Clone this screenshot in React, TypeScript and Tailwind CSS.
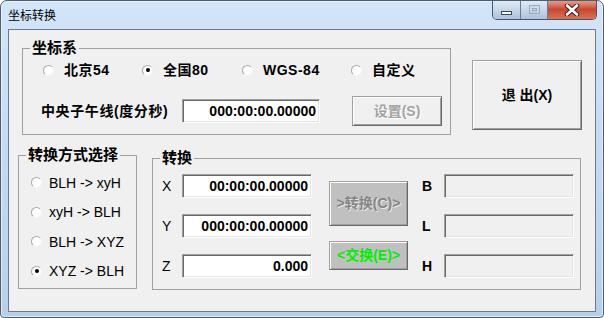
import React from "react";

const ui = "font-['Liberation_Sans','Noto_Sans_CJK_SC',sans-serif]";

const Radio = ({ label, checked = false, bold = false, gap = "ml-[8px]", className = "" }: { label: string; checked?: boolean; bold?: boolean; gap?: string; className?: string }) => (
  <label className={`flex items-center ${className}`}>
    <span className="flex h-[11px] w-[11px] items-center justify-center rounded-full border border-[#a8a8a8] border-b-[#f4f4f4] border-r-[#f4f4f4] bg-white">
      {checked && <span className="h-[4px] w-[4px] rounded-full bg-black" />}
    </span>
    <span className={`${gap} text-[14px] leading-[18px] text-black ${bold ? "font-bold tracking-[0.5px]" : ""}`}>{label}</span>
  </label>
);

const Sunken = ({ value = "", width = "w-[130px]", readOnly = false }: { value?: string; width?: string; readOnly?: boolean }) => (
  <div
    className={`${width} flex h-[24px] items-center justify-end border border-[#a0a0a0] border-b-white border-r-white pr-[3px] shadow-[inset_1px_1px_0_#696969,inset_-1px_-1px_0_#e3e3e3] ${
      readOnly ? "bg-[#f0f0f0]" : "bg-white"
    }`}
  >
    <span className="text-[14px] font-bold leading-[18px] text-black">{value}</span>
  </div>
);

const Group = ({ title, className, children }: { title: string; className: string; children: React.ReactNode }) => (
  <fieldset className={`border border-[#a0a0a0] ${className}`}>
    <legend className="ml-[7px] px-[2px] text-[15px] font-bold leading-[20px] text-black">{title}</legend>
    {children}
  </fieldset>
);

const raised =
  "flex items-center justify-center border border-[#a0a0a0] border-b-[#696969] border-r-[#696969] shadow-[inset_1px_1px_0_#ffffff,inset_-1px_-1px_0_#a0a0a0]";

export default function App() {
  return (
    <div className={`${ui} h-[318px] w-[604px] overflow-hidden rounded-b-[4px] rounded-t-[7px] border border-[#4f5e6f] bg-gradient-to-b from-[#d3e5f8] via-[#c4daf2] to-[#b7d0ea] shadow-[inset_0_0_0_1px_rgba(255,255,255,0.55)]`}>
      {/* title bar */}
      <div className="flex h-[28px] items-start">
        <span className="pl-[7px] pt-[6px] text-[12px] leading-[18px] text-black">坐标转换</span>
        <div className="-mt-[1px] ml-auto mr-[6px] flex h-[20px] overflow-hidden rounded-b-[5px] border border-t-0 border-[#46556a]">
          <div className="flex w-[28px] items-center justify-center border-r border-[#6c7c90] bg-gradient-to-b from-[#e4edf8] via-[#c9d8ea] to-[#adc2dc]">
            <span className="mt-[6px] h-[4px] w-[11px] border border-[#3c4a5c] bg-white" />
          </div>
          <div className="flex w-[27px] items-center justify-center border-r border-[#6c7c90] bg-gradient-to-b from-[#e4edf8] via-[#c9d8ea] to-[#adc2dc]">
            <span className="flex h-[9px] w-[11px] items-center justify-center border border-[#9aaabd]">
              <span className="h-[3px] w-[5px] border border-[#9aaabd]" />
            </span>
          </div>
          <div className="flex w-[48px] items-center justify-center bg-gradient-to-b from-[#e8a493] via-[#c9462f] to-[#d3755c]">
            <svg width="16" height="12" viewBox="0 0 16 12">
              <path d="M3 1.5 L13 10.5 M13 1.5 L3 10.5" stroke="#3a1a14" strokeWidth="4.5" strokeLinecap="round" />
              <path d="M3 1.5 L13 10.5 M13 1.5 L3 10.5" stroke="#ffffff" strokeWidth="2.6" strokeLinecap="round" />
            </svg>
          </div>
        </div>
      </div>

      {/* client area */}
      <div className="mx-[7px] h-[283px] border border-[#6d7a89] bg-[#f0f0f0] text-black">
        <div className="flex items-start pl-[13px] pt-[8px]">
          <Group title="坐标系" className="h-[97px] w-[429px]">
            <div className="mt-[3px] flex pl-[20px]">
              <Radio label="北京54" bold gap="ml-[10px]" className="w-[99px]" />
              <Radio label="全国80" bold checked gap="ml-[10px]" className="w-[100px]" />
              <Radio label="WGS-84" bold gap="ml-[10px]" className="w-[109px]" />
              <Radio label="自定义" bold gap="ml-[10px]" />
            </div>
            <div className="mt-[17px] flex h-[30px] items-center pl-[18px]">
              <span className="w-[141px] text-[14px] font-bold leading-[18px] tracking-[0.6px]">中央子午线(度分秒)</span>
              <Sunken value="000:00:00.00000" width="w-[138px]" />
              <button className={`${raised} ml-[32px] h-[30px] w-[90px] bg-[#f0f0f0] text-[14px] font-bold text-[#a3a3a3] [text-shadow:1px_1px_0_#ffffff]`}>
                设置(S)
              </button>
            </div>
          </Group>
          <button className={`${raised} ml-[21px] mt-[22px] h-[70px] w-[110px] bg-[#f0f0f0] text-[14px] font-bold`}>
            退 出(X)
          </button>
        </div>

        <div className="mt-[10px] flex items-start pl-[9px]">
          <Group title="转换方式选择" className="h-[144px] w-[119px]">
            <div className="flex flex-col pl-[12px] pt-[3px]">
              <Radio label="BLH -> xyH" gap="ml-[7px]" className="h-[29.5px]" />
              <Radio label="xyH -> BLH" gap="ml-[7px]" className="h-[29.5px]" />
              <Radio label="BLH -> XYZ" gap="ml-[7px]" className="h-[29.5px]" />
              <Radio label="XYZ -> BLH" checked gap="ml-[7px]" className="h-[29.5px]" />
            </div>
          </Group>

          <Group title="转换" className="ml-[15px] mt-[3px] h-[142px] w-[429px]">
            <div className="flex items-start pl-[9px]">
              <div className="mt-[6px] flex flex-col gap-[16px]">
                {[
                  ["X", "00:00:00.00000"],
                  ["Y", "000:00:00.00000"],
                  ["Z", "0.000"],
                ].map(([k, v]) => (
                  <div key={k} className="flex items-center">
                    <span className="w-[20px] text-[14px] leading-[18px]">{k}</span>
                    <Sunken value={v} />
                  </div>
                ))}
              </div>
              <div className="ml-[17px] flex flex-col">
                <button className={`${raised} mt-[13px] h-[45px] w-[79px] bg-[#c0c0c0] text-[14px] font-bold text-[#858585] [text-shadow:1px_1px_0_#e8e8e8]`}>
                  &gt;转换(C)&gt;
                </button>
                <button className={`${raised} mt-[15px] h-[29px] w-[79px] bg-[#c0c0c0] text-[14px] font-bold text-[#00ee00]`}>
                  &lt;交换(E)&gt;
                </button>
              </div>
              <div className="ml-[14px] mt-[6px] flex flex-col gap-[16px]">
                {["B", "L", "H"].map((k) => (
                  <div key={k} className="flex items-center">
                    <span className="w-[22px] text-[14px] font-bold leading-[18px]">{k}</span>
                    <Sunken readOnly />
                  </div>
                ))}
              </div>
            </div>
          </Group>
        </div>
      </div>
    </div>
  );
}
